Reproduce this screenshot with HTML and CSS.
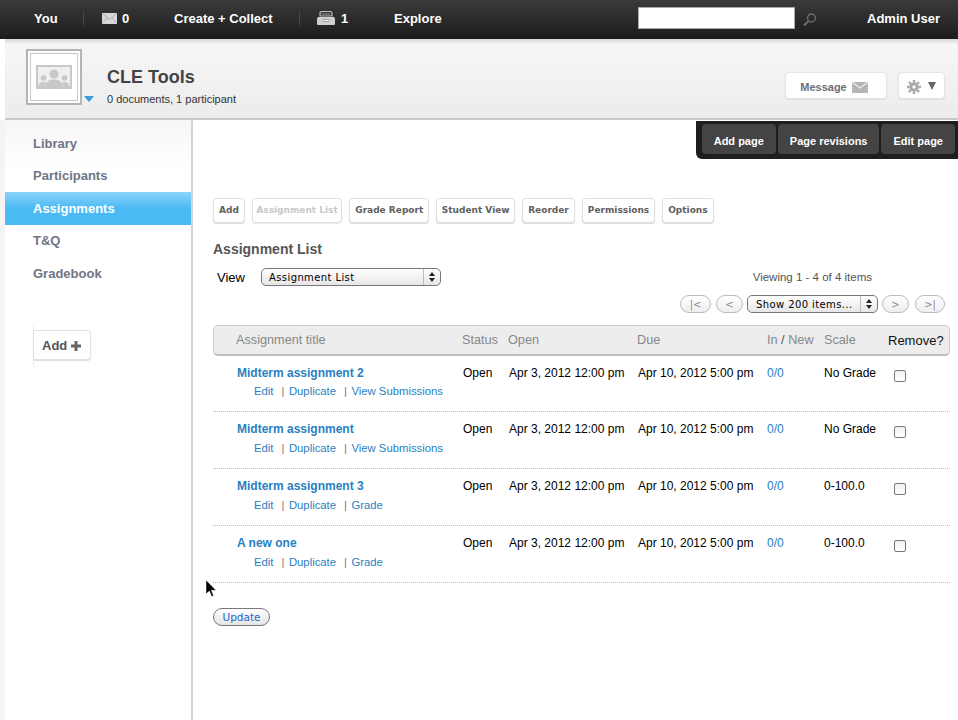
FILE: index.html
```html
<!DOCTYPE html>
<html lang="en">
<head>
    <meta charset="UTF-8">
    <title>CLE Tools - Assignments</title>
    <link rel="stylesheet" href="styles.css">
</head>
<body>
    <!-- Top bar -->
    <div class="topbar">
        <a class="top-you">You</a>
        <span class="top-sep"></span>
        <a class="top-mail">
            <svg width="15" height="11" viewBox="0 0 15 11"><rect width="15" height="11" fill="#d8d8d8"/><path d="M0 .5l7.500 6 7.500-6M0 10.500l5.500-6M15 10.500l-5.500-6" fill="none" stroke="#a4a4a4" stroke-width=".8"/></svg>
            0
        </a>
        <a class="top-create">Create + Collect</a>
        <span class="top-sep"></span>
        <a class="top-tray">
            <svg width="18" height="14" viewBox="0 0 18 14"><path d="M3 5V2.500C3 1 4 .5 5 .5h8c1 0 2 .5 2 2V5z" fill="#3a3a3a" stroke="#bcbcbc" stroke-width="1.200"/><path d="M5 2.500h8v1H5z" fill="#8c8c8c"/><path d="M1 6h16l1 1.500V13a1 1 0 0 1-1 1H1a1 1 0 0 1-1-1V7.500z" fill="#cfcfcf"/><rect x="6" y="8.500" width="6" height="2" rx=".5" fill="#f2f2f2" stroke="#777" stroke-width=".6"/></svg>
            1
        </a>
        <a class="top-explore">Explore</a>
        <input class="top-search" type="text">
        <svg class="top-glass" width="14" height="14" viewBox="0 0 14 14"><circle cx="8.500" cy="5" r="4" fill="none" stroke="#6f6f6f" stroke-width="1.300"/><path d="M5.500 8L1 12.500" stroke="#6f6f6f" stroke-width="2"/></svg>
        <a class="top-user">Admin User</a>
    </div>

    <!-- Group header -->
    <div class="header">
        <div class="avatar">
            <svg width="36" height="24" viewBox="0 0 36 24"><rect x="1" y="1" width="34" height="22" fill="#efefef" stroke="#c8c8c8" stroke-width="2"/><g fill="#c8c8c8"><circle cx="18" cy="9" r="4.500"/><path d="M9 23c0-6 4-8.500 9-8.500s9 2.500 9 8.500z"/><circle cx="7.500" cy="13" r="2.800"/><path d="M2 23c0-4 2.200-6 5.500-6 1.200 0 2.200.2 3 .7C9.300 19 8.700 20.800 8.500 23z"/><circle cx="28.500" cy="13" r="2.800"/><path d="M34 23c0-4-2.200-6-5.500-6-1.200 0-2.200.2-3 .7 1.200 1.300 1.800 3.100 2 5.300z"/></g></svg>
        </div>
        <span class="avatar-arrow"></span>
        <div class="header-text">
            <h1>CLE Tools</h1>
            <p>0 documents, 1 participant</p>
        </div>
        <div class="header-actions">
            <a class="btn-message">Message
                <svg width="16" height="11" viewBox="0 0 16 11"><rect width="16" height="11" fill="#b5b5b5"/><path d="M0 0l8 6 8-6" fill="none" stroke="#eee" stroke-width="1.200"/></svg>
            </a>
            <a class="btn-gear">
                <svg width="14" height="14" viewBox="0 0 14 14"><circle cx="7" cy="7" r="3.200" fill="none" stroke="#a8a8a8" stroke-width="3"/><g stroke="#a8a8a8" stroke-width="2.400"><path d="M7 0v2.500M7 11.500V14M0 7h2.500M11.500 7H14M2 2l1.800 1.800M10.200 10.200L12 12M12 2l-1.800 1.800M3.800 10.200L2 12"/></g></svg>
                <span class="gear-arrow"></span>
            </a>
        </div>
    </div>

    <div class="page">
        <!-- Left navigation -->
        <div class="sidebar">
            <ul class="nav">
                <li>Library</li>
                <li>Participants</li>
                <li class="active">Assignments</li>
                <li>T&amp;Q</li>
                <li>Gradebook</li>
            </ul>
            <a class="nav-add">Add
                <svg width="10" height="10" viewBox="0 0 10 10"><path d="M3.500 0h3v3.500H10v3H6.500V10h-3V6.500H0v-3h3.500z" fill="#666"/></svg>
            </a>
        </div>

        <!-- Main content -->
        <div class="main">
            <div class="toolbar">
                <a class="tool">Add</a>
                <a class="tool disabled">Assignment List</a>
                <a class="tool">Grade Report</a>
                <a class="tool student">Student View</a>
                <a class="tool">Reorder</a>
                <a class="tool">Permissions</a>
                <a class="tool">Options</a>
            </div>

            <h2>Assignment List</h2>

            <div class="view-row">
                <label>View</label>
                <div class="fake-select view-select">Assignment List <span class="stepper"></span></div>
                <span class="viewing">Viewing 1 - 4 of 4 items</span>
            </div>

            <div class="pager">
                <a class="pill">|&lt;</a>
                <a class="pill pill-small">&lt;</a>
                <div class="fake-select pager-select">Show 200 items... <span class="stepper"></span></div>
                <a class="pill pill-small">&gt;</a>
                <a class="pill pill-last">&gt;|</a>
            </div>

            <div class="list-head row">
                <span class="col-title">Assignment title</span>
                <span class="col-status">Status</span>
                <span class="col-open">Open</span>
                <span class="col-due">Due</span>
                <span class="col-in">In <b>/</b> New</span>
                <span class="col-scale">Scale</span>
                <span class="col-remove">Remove?</span>
            </div>

            <div class="item row">
                <div class="col-title">
                    <a class="item-title">Midterm assignment 2</a>
                    <div class="item-links"><a>Edit</a><i>|</i><a>Duplicate</a><i>|</i><a>View Submissions</a></div>
                </div>
                <span class="col-status">Open</span>
                <span class="col-open">Apr 3, 2012 12:00 pm</span>
                <span class="col-due">Apr 10, 2012 5:00 pm</span>
                <a class="col-in">0/0</a>
                <span class="col-scale">No Grade</span>
                <span class="col-remove"><span class="check"></span></span>
            </div>
            <div class="item row">
                <div class="col-title">
                    <a class="item-title">Midterm assignment</a>
                    <div class="item-links"><a>Edit</a><i>|</i><a>Duplicate</a><i>|</i><a>View Submissions</a></div>
                </div>
                <span class="col-status">Open</span>
                <span class="col-open">Apr 3, 2012 12:00 pm</span>
                <span class="col-due">Apr 10, 2012 5:00 pm</span>
                <a class="col-in">0/0</a>
                <span class="col-scale">No Grade</span>
                <span class="col-remove"><span class="check"></span></span>
            </div>
            <div class="item row">
                <div class="col-title">
                    <a class="item-title">Midterm assignment 3</a>
                    <div class="item-links"><a>Edit</a><i>|</i><a>Duplicate</a><i>|</i><a>Grade</a></div>
                </div>
                <span class="col-status">Open</span>
                <span class="col-open">Apr 3, 2012 12:00 pm</span>
                <span class="col-due">Apr 10, 2012 5:00 pm</span>
                <a class="col-in">0/0</a>
                <span class="col-scale">0-100.0</span>
                <span class="col-remove"><span class="check"></span></span>
            </div>
            <div class="item row">
                <div class="col-title">
                    <a class="item-title">A new one</a>
                    <div class="item-links"><a>Edit</a><i>|</i><a>Duplicate</a><i>|</i><a>Grade</a></div>
                </div>
                <span class="col-status">Open</span>
                <span class="col-open">Apr 3, 2012 12:00 pm</span>
                <span class="col-due">Apr 10, 2012 5:00 pm</span>
                <a class="col-in">0/0</a>
                <span class="col-scale">0-100.0</span>
                <span class="col-remove"><span class="check"></span></span>
            </div>

            <a class="btn-update">Update</a>
        </div>

        <!-- Floating page menu -->
        <div class="page-menu">
            <a>Add page</a>
            <a>Page revisions</a>
            <a>Edit page</a>
        </div>

        <!-- Mouse pointer caught in the screenshot -->
        <svg class="cursor" width="11" height="17" viewBox="0 0 11 17"><path d="M0 0v14l3.400-3 2.200 5.500 2-.8L5.400 10.300H10z" fill="#000" stroke="#fff" stroke-width=".5"/></svg>
    </div>
</body>
</html>
```

FILE: styles.css
```css
* {
    box-sizing: border-box;
}

body {
    margin: 0;
    height: 720px;
    overflow: hidden;
    font-family: "Liberation Sans", Arial, sans-serif;
    font-size: 12px;
    color: #000;
    background: #fff;
}

/* Top bar */
.topbar {
    display: flex;
    align-items: center;
    height: 39px;
    padding-bottom: 3px;
    background: linear-gradient(#3a3a3a, #1c1c1c);
    color: #fff;
    font-size: 13px;
    font-weight: bold;
    white-space: nowrap;
}

.topbar a {
    display: flex;
    align-items: center;
}

.top-you {
    width: 24px;
    margin-left: 34px;
}

.top-sep {
    width: 1px;
    height: 13px;
    background: #4a4a4a;
}

.top-you + .top-sep {
    margin-left: 25px;
}

.top-mail {
    width: 38px;
    margin-left: 18px;
    gap: 5px;
}

.top-create {
    width: 99px;
    margin-left: 34px;
}

.top-create + .top-sep {
    margin-left: 26px;
}

.top-tray {
    width: 36px;
    margin-left: 17px;
    gap: 6px;
}

.top-explore {
    width: 48px;
    margin-left: 41px;
}

.top-search {
    width: 157px;
    height: 22px;
    margin: 0 0 0 196px;
    padding: 0;
    background: #fff;
    border: 1px solid #aaa;
}

.top-glass {
    margin-left: 8px;
    margin-top: 4px;
}

.top-user {
    margin-left: 50px;
}

/* Group header */
.header {
    position: relative;
    display: flex;
    height: 81px;
    margin-left: 5px;
    padding: 10px 13px 0 21px;
    background: linear-gradient(#f7f7f7, #ececec);
    border-bottom: 2px solid #c8c8c8;
    box-shadow: inset 0 5px 4px -3px #d0d0d0;
}

.avatar {
    display: flex;
    align-items: center;
    justify-content: center;
    width: 56px;
    height: 56px;
    background: #fff;
    border: 2px solid #b4b4b4;
    outline: 1px solid #c8c8c8;
    outline-offset: -5px;
}

.avatar-arrow {
    align-self: flex-start;
    width: 0;
    height: 0;
    margin: 47px 0 0 2px;
    border-left: 5px solid transparent;
    border-right: 5px solid transparent;
    border-top: 6px solid #3b9bd6;
}

.header-text {
    margin-left: 13px;
    padding-top: 17px;
}

.header-text h1 {
    margin: 0;
    font-size: 18px;
    line-height: 22px;
    color: #444;
}

.header-text p {
    margin: 5px 0 0;
    font-size: 11px;
    line-height: 13px;
    color: #333;
}

.header-actions {
    display: flex;
    gap: 11px;
    margin-left: auto;
    padding-top: 23px;
}

.btn-message,
.btn-gear {
    display: flex;
    align-items: center;
    height: 27px;
    padding-top: 3px;
    background: #fff;
    border: 1px solid #e4e4e4;
    border-radius: 4px;
    box-shadow: 0 1px 1px #ddd;
    color: #6e6e78;
    font-size: 11px;
    font-weight: bold;
}

.btn-message {
    justify-content: center;
    gap: 5px;
    width: 102px;
    padding-right: 4px;
}

.btn-gear {
    justify-content: center;
    gap: 7px;
    width: 47px;
}

.gear-arrow {
    width: 0;
    height: 0;
    margin-bottom: 3px;
    border-left: 4px solid transparent;
    border-right: 4px solid transparent;
    border-top: 8px solid #666;
}

/* Page body */
.page {
    position: relative;
    display: flex;
    height: 600px;
    background: #f4f4f4;
}

.sidebar {
    flex: none;
    width: 188px;
    margin-left: 5px;
    background: linear-gradient(#f6f6f6, #fff 48px);
    border-right: 2px solid #d4d4d4;
}

.nav {
    margin: 7px 0 0;
    padding: 0;
    list-style: none;
}

.nav li {
    height: 32.500px;
    padding-left: 28px;
    line-height: 32px;
    font-size: 13px;
    font-weight: bold;
    color: #6f7584;
}

.nav li:first-child {
    padding-top: 1px;
}

.nav li.active {
    height: 33px;
    background: linear-gradient(#8dd4fb, #4ab9f4 50%);
    line-height: 34px;
    color: #fff;
}

.nav-add {
    position: relative;
    display: inline-flex;
    align-items: center;
    gap: 4px;
    width: 58px;
    height: 30px;
    margin: 40px 0 0 28px;
    padding: 1px 0 0 9px;
    background: #fff;
    border: 1px solid #e2e2e2;
    border-left: none;
    border-radius: 0 4px 4px 0;
    box-shadow: 0 1px 1px #ddd;
    color: #555;
    font-size: 13px;
    font-weight: bold;
}

.nav-add::before {
    content: "";
    position: absolute;
    top: -11px;
    bottom: -12px;
    left: 0;
    width: 1px;
    background: linear-gradient(#fff, #dcdcdc 30%, #dcdcdc 70%, #fff);
}

.main {
    flex: none;
    width: 765px;
    padding: 78px 0 0 20px;
    background: #fff;
}

/* Tool buttons */
.toolbar {
    display: flex;
    gap: 7px;
}

.tool {
    display: flex;
    align-items: center;
    height: 25px;
    padding: 0 5px 1px;
    background: #fff;
    border: 1px solid #e0e0e0;
    border-radius: 4px;
    box-shadow: 0 1px 1px #d8d8d8;
    color: #606060;
    font-family: "DejaVu Sans", sans-serif;
    font-size: 9px;
    font-weight: bold;
    white-space: nowrap;
}

.tool.disabled {
    padding: 0 3.500px 1px;
    color: #c8c8c8;
    box-shadow: 0 1px 1px #e8e8e8;
}

.tool.student {
    padding: 0 4.500px 1px;
}

h2 {
    margin: 18px 0 0;
    font-size: 14px;
    line-height: 17px;
    color: #555;
}

.view-row {
    display: flex;
    align-items: center;
    height: 20px;
    margin-top: 9px;
    padding-left: 4px;
}

.view-row label {
    width: 44px;
    font-size: 13px;
}

.fake-select {
    position: relative;
    display: flex;
    align-items: center;
    height: 18px;
    background: linear-gradient(#fff, #e6e6e6);
    border: 1px solid #777;
    border-radius: 5px;
    font-family: "DejaVu Sans", sans-serif;
    font-size: 10px;
    letter-spacing: 0.4px;
}

.view-select {
    width: 180px;
    padding-left: 7px;
}

.stepper {
    position: absolute;
    top: 0;
    right: 0;
    bottom: 0;
    width: 17px;
    border-left: 1px solid #bbb;
}

.stepper::before,
.stepper::after {
    content: "";
    position: absolute;
    left: 5px;
    border-left: 3px solid transparent;
    border-right: 3px solid transparent;
}

.stepper::before {
    top: 3px;
    border-bottom: 4px solid #222;
}

.stepper::after {
    bottom: 3px;
    border-top: 4px solid #222;
}

.viewing {
    margin-left: auto;
    padding-right: 86px;
    font-size: 11.500px;
    color: #555;
}

.pager {
    display: flex;
    align-items: center;
    justify-content: flex-end;
    gap: 4px;
    height: 18px;
    margin-top: 8px;
    margin-right: 13px;
}

.pill {
    display: flex;
    align-items: center;
    justify-content: center;
    width: 31px;
    height: 18px;
    margin-right: 1px;
    background: linear-gradient(#fff, #eee);
    border: 1px solid #bbb;
    border-radius: 9px;
    color: #888;
    font-family: "DejaVu Sans", sans-serif;
    font-size: 10px;
}

.pill-small {
    width: 27px;
    margin-right: 0;
}

.pager-select {
    width: 131px;
    padding-left: 8px;
}

.pill-last {
    width: 30px;
    margin: 0 0 0 2px;
}

/* Assignment list */
.row {
    display: flex;
    align-items: flex-start;
    width: 737px;
}

.col-title {
    flex: none;
    width: 250px;
    padding-left: 24px;
}

.col-status {
    flex: none;
    width: 46px;
}

.col-open,
.col-due {
    flex: none;
    width: 129px;
}

.col-in {
    flex: none;
    width: 57px;
}

.col-scale {
    flex: none;
    width: 64px;
}

.list-head {
    align-items: center;
    height: 31px;
    margin-top: 12px;
    background: #ededed;
    border: 1px solid #ccc;
    border-bottom: 2px solid #bdbdbd;
    border-radius: 5px;
    color: #888;
    font-size: 12.700px;
}

.list-head .col-title {
    width: 248px;
    padding-left: 22px;
}

.list-head .col-due {
    width: 130px;
}

.list-head b {
    font-weight: normal;
    color: #555;
}

.list-head .col-remove {
    color: #111;
    font-size: 13px;
}

.item {
    height: 57px;
    padding-top: 10px;
    border-bottom: 1px dotted #bbb;
    font-size: 12px;
}

.list-head + .item {
    height: 56px;
}

.item-title {
    display: block;
    line-height: 14px;
    font-weight: bold;
    color: #2a7fc1;
}

.item-links {
    display: flex;
    margin-top: 6px;
    padding-left: 17px;
    color: #2a7fc1;
    font-size: 11.300px;
    line-height: 13px;
    white-space: nowrap;
}

.list-head + .item .item-links {
    margin-top: 5px;
}

.item-links i {
    margin: 0 4.500px 0 8px;
    font-style: normal;
    color: #777;
}

.item .col-status,
.item .col-open,
.item .col-due,
.item .col-in,
.item .col-scale {
    line-height: 14px;
}

.item .col-in {
    color: #2a7fc1;
}

.item .col-remove {
    padding-left: 6px;
}

.check {
    display: block;
    width: 12px;
    height: 12px;
    margin-top: 4px;
    background: linear-gradient(#f0f0f0, #fff);
    border: 1px solid #777;
    border-radius: 2px;
}

.btn-update {
    display: flex;
    align-items: center;
    justify-content: center;
    width: 57px;
    height: 18px;
    margin-top: 25px;
    background: linear-gradient(#fff, #e4e4e4);
    border: 1px solid #777;
    border-radius: 9px;
    color: #2b66cc;
    font-family: "DejaVu Sans", sans-serif;
    font-size: 10.500px;
}

/* Floating page menu */
.page-menu {
    position: absolute;
    top: 1px;
    right: 0;
    display: flex;
    gap: 2px;
    padding: 3px 3px 5px 6px;
    background: #1e1e1e;
    border-radius: 0 0 0 6px;
}

.page-menu a {
    display: flex;
    align-items: center;
    justify-content: center;
    height: 30px;
    padding: 3px 12px 0;
    background: #444;
    border-radius: 4px;
    color: #fff;
    font-size: 11px;
    font-weight: bold;
}

.cursor {
    position: absolute;
    top: 460px;
    left: 206px;
}
```
